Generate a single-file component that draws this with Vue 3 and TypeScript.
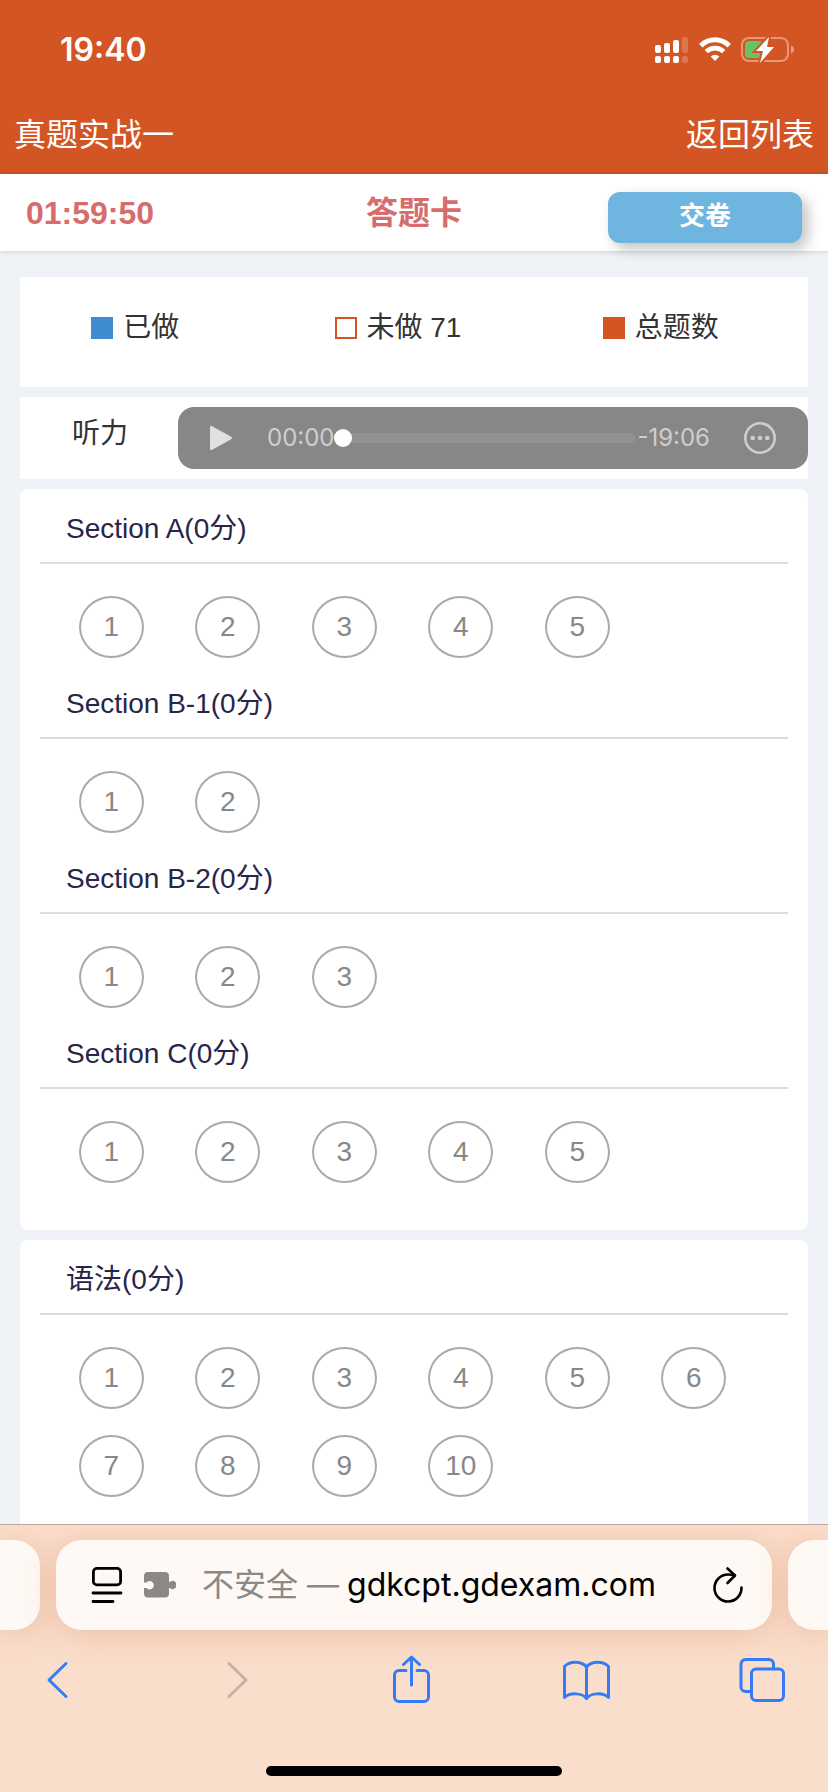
<script setup lang="ts">
import { ref } from 'vue'

interface Section {
  title: string
  count: number
}

const cards: Section[][] = [
  [
    { title: 'Section A(0分)', count: 5 },
    { title: 'Section B-1(0分)', count: 2 },
    { title: 'Section B-2(0分)', count: 3 },
    { title: 'Section C(0分)', count: 5 },
  ],
  [{ title: '语法(0分)', count: 10 }],
]

const legend = [
  { kind: 'done', label: '已做' },
  { kind: 'todo', label: '未做 71' },
  { kind: 'total', label: '总题数' },
]

const position = ref(0)
</script>

<template>
  <div class="screen">
    <header class="top">
      <div class="status">
        <span class="clock">19:40</span>
        <div class="status-icons">
          <svg width="34" height="26" viewBox="0 0 34 26" fill="#fff" aria-hidden="true">
            <rect x="0" y="8" width="6" height="8" rx="2" />
            <rect x="9" y="6" width="6" height="10" rx="2" />
            <rect x="18" y="3" width="6" height="13" rx="2" />
            <rect x="27" y="0" width="6" height="16" rx="2" opacity=".2" />
            <rect x="0" y="19" width="6" height="7" rx="2" />
            <rect x="9" y="19" width="6" height="7" rx="2" />
            <rect x="18" y="19" width="6" height="7" rx="2" />
            <rect x="27" y="19" width="6" height="7" rx="2" opacity=".2" />
          </svg>
          <svg width="32" height="26" viewBox="0 0 32 26" fill="none" aria-hidden="true">
            <path d="M1.800 8.700a20.200 20.200 0 0 1 28.400 0" stroke="#fff" stroke-width="5" />
            <path d="M7.300 14.600a12.400 12.400 0 0 1 17.400 0" stroke="#fff" stroke-width="4.800" />
            <path d="M11.700 19.400a6.200 6.200 0 0 1 8.600 0L16 24z" fill="#fff" />
          </svg>
          <svg width="54" height="28" viewBox="0 0 54 28" fill="none" aria-hidden="true">
            <rect x="1" y="2" width="46" height="23" rx="7" stroke="#fff" stroke-opacity=".4" stroke-width="2" />
            <path d="M50 9.500c4 1.500 4 6.500 0 8z" fill="#fff" opacity=".45" />
            <rect x="4" y="5" width="18" height="17" rx="4" fill="#65c466" />
            <path d="M28 1 15 15h7l-3 12L33 11h-7z" fill="#fff" stroke="#d35523" stroke-width="4" />
            <path d="M28 1 15 15h7l-3 12L33 11h-7z" fill="#fff" />
          </svg>
        </div>
      </div>
      <nav class="nav">
        <h1 class="nav-title">真题实战一</h1>
        <a class="nav-link" href="#list">返回列表</a>
      </nav>
    </header>

    <div class="timer-bar">
      <time class="timer">01:59:50</time>
      <h2 class="bar-title">答题卡</h2>
      <button class="submit" type="button">交卷</button>
    </div>

    <main class="content">
      <ul class="legend">
        <li v-for="item in legend" :key="item.kind" class="legend-item">
          <span class="swatch" :class="item.kind"></span>
          <span>{{ item.label }}</span>
        </li>
      </ul>

      <section class="listening">
        <label class="listening-label" for="seek">听力</label>
        <div class="player">
          <button class="player-btn play" type="button" aria-label="播放">
            <svg width="24" height="26" viewBox="0 0 24 26" aria-hidden="true">
              <path d="M1 2.500c0-1.400 1-2 2.200-1.300l19 10.500c1 .6 1 2 0 2.600l-19 10.500C2 25.500 1 24.900 1 23.500z" fill="#e0e0e0" />
            </svg>
          </button>
          <span class="time">00:00</span>
          <input id="seek" v-model.number="position" class="seek" type="range" min="0" max="1146" />
          <span class="time">-19:06</span>
          <button class="player-btn more" type="button" aria-label="更多">
            <svg width="32" height="32" viewBox="0 0 32 32" aria-hidden="true">
              <circle cx="16" cy="16" r="14.700" fill="none" stroke="#cecece" stroke-width="2.600" />
              <circle cx="8.700" cy="16" r="2.300" fill="#cecece" />
              <circle cx="16" cy="16" r="2.300" fill="#cecece" />
              <circle cx="23.300" cy="16" r="2.300" fill="#cecece" />
            </svg>
          </button>
        </div>
      </section>

      <div v-for="(card, index) in cards" :key="index" class="card">
        <section v-for="section in card" :key="section.title">
          <h3 class="section-title">{{ section.title }}</h3>
          <ol class="questions">
            <li v-for="n in section.count" :key="n">
              <button class="question" type="button">{{ n }}</button>
            </li>
          </ol>
        </section>
      </div>
    </main>

    <footer class="browser">
      <div class="tabs">
        <div class="pill prev"></div>
        <div class="pill address">
          <button class="icon-btn" type="button" aria-label="阅读模式">
            <svg width="32" height="38" viewBox="0 0 32 38" fill="none" stroke="#000" stroke-width="2.800" stroke-linecap="round" aria-hidden="true">
              <rect x="2.400" y="2.400" width="27.200" height="16.500" rx="3.500" />
              <path d="M2 27h28M2 35.500h20" />
            </svg>
          </button>
          <svg class="puzzle" width="32" height="28" viewBox="0 0 32 28" fill="#8b8888" aria-hidden="true">
            <path d="M4 1h17a4 4 0 0 1 4 4v6h1a4 4 0 1 1 0 6h-1v5.500a4 4 0 0 1-4 4H4a4 4 0 0 1-4-4V17h2.500a4.200 4.200 0 1 0 0-5.500H0V5a4 4 0 0 1 4-4z" />
          </svg>
          <button class="url" type="button">
            <span class="insecure">不安全 —</span>
            <span>gdkcpt.gdexam.com</span>
          </button>
          <button class="icon-btn" type="button" aria-label="刷新">
            <svg width="32" height="38" viewBox="0 0 32 38" fill="none" stroke="#000" stroke-width="2.600" stroke-linecap="round" stroke-linejoin="round" aria-hidden="true">
              <path d="M29.500 21.500A13.500 13.500 0 1 1 16 8.500q3.500 0 6.500 1" />
              <path d="M15.500 2.500l7.500 7-7.500 7.500" />
            </svg>
          </button>
        </div>
        <div class="pill next"></div>
      </div>
      <nav class="toolbar">
        <button class="tool" type="button" aria-label="后退">
          <svg viewBox="0 0 60 60"><path d="M39 13.500 22 30l17 16.500" /></svg>
        </button>
        <button class="tool" type="button" aria-label="前进" disabled>
          <svg viewBox="0 0 60 60"><path d="M26 13.500 43 30 26 46.500" /></svg>
        </button>
        <button class="tool" type="button" aria-label="共享">
          <svg viewBox="0 0 60 60">
            <path d="M26 20.500h-7a4.500 4.500 0 0 0-4.500 4.500v22a4.500 4.500 0 0 0 4.500 4.500h25a4.500 4.500 0 0 0 4.500-4.500V25a4.500 4.500 0 0 0-4.500-4.500h-7" />
            <path d="M31.500 35V7.500M23.500 14.500l8-7.500 8 7.500" />
          </svg>
        </button>
        <button class="tool" type="button" aria-label="书签">
          <svg viewBox="0 0 60 60">
            <path d="M30.500 17C26 11.200 14 10.500 8.500 16.500v31C14 42.500 26 42.500 30.500 48.500 35 42.500 47 42.500 52.500 47.500v-31C47 10.500 35 11.200 30.500 17zM30.500 17v31" />
          </svg>
        </button>
        <button class="tool" type="button" aria-label="标签页">
          <svg viewBox="0 0 60 60">
            <path d="M18 41.500h-4.500A4.500 4.500 0 0 1 9 37V14a4.500 4.500 0 0 1 4.500-4.500H37a4.500 4.500 0 0 1 4.500 4.500v4" />
            <rect x="19.500" y="19" width="32" height="31.500" rx="4.500" />
          </svg>
        </button>
      </nav>
      <div class="home-indicator"></div>
    </footer>
  </div>
</template>

<style>
body {
  margin: 0;
}
</style>

<style scoped>
.screen {
  display: flex;
  flex-direction: column;
  height: 100vh;
  overflow: hidden;
  background: #eff2f7;
  color: #333;
  font-family: "Liberation Sans", "Noto Sans CJK SC", sans-serif;
  font-size: 28px;
  line-height: 40px;
}

h1,
h2,
h3,
ul,
ol {
  margin: 0;
  padding: 0;
  font-size: inherit;
  font-weight: 400;
  list-style: none;
}

button {
  margin: 0;
  padding: 0;
  border: 0;
  background: none;
  color: inherit;
  font: inherit;
}

svg {
  display: block;
}

.top {
  flex: none;
  background: #d35523;
  color: #fff;
}

.status {
  display: flex;
  align-items: center;
  justify-content: space-between;
  height: 100px;
  padding: 0 33px 0 60px;
}

.clock {
  font-family: Inter, sans-serif;
  font-size: 32px;
  font-weight: 600;
}

.status-icons {
  display: flex;
  align-items: center;
  gap: 10px;
}

.nav {
  display: flex;
  align-items: center;
  justify-content: space-between;
  box-sizing: border-box;
  height: 74px;
  padding: 0 14px 4px;
}

.nav-title,
.nav-link {
  color: #fff;
  font-size: 32px;
  text-decoration: none;
}

.timer-bar {
  position: relative;
  z-index: 1;
  display: grid;
  grid-template-columns: 1fr auto 1fr;
  align-items: center;
  flex: none;
  height: 77px;
  padding: 0 26px;
  background: #fff;
  box-shadow: 0 0 6px rgba(0, 0, 0, 0.16);
  color: #d76c6c;
}

.timer,
.bar-title {
  font-size: 32px;
  font-weight: 700;
}

.submit {
  justify-self: end;
  width: 194px;
  height: 51px;
  margin-top: 10px;
  padding-bottom: 4px;
  border-radius: 12px;
  background: #6eb5df;
  box-shadow: 6px 6px 14px rgba(0, 0, 0, 0.24);
  color: #fff;
  font-size: 26px;
  font-weight: 700;
}

.content {
  display: flex;
  flex: 1;
  flex-direction: column;
  gap: 10px;
  min-height: 0;
  padding: 26px 20px 0;
  overflow: hidden;
}

.legend {
  display: grid;
  flex: none;
  grid-template-columns: repeat(3, 1fr);
  height: 110px;
  background: #fff;
}

.legend-item {
  display: flex;
  align-items: center;
  justify-content: center;
  gap: 10px;
  height: 102px;
  padding-right: 32px;
}

.swatch {
  box-sizing: border-box;
  width: 22px;
  height: 22px;
}

.swatch.done {
  background: #3f8ccf;
}

.swatch.todo {
  border: 2px solid #d35523;
}

.swatch.total {
  background: #d35523;
}

.listening {
  display: flex;
  flex: none;
  align-items: center;
  height: 82px;
  background: #fff;
}

.listening-label {
  width: 106px;
  padding: 0 0 8px 52px;
}

.player {
  display: flex;
  flex: 1;
  align-items: center;
  height: 62px;
  border-radius: 16px;
  background: #878787;
  color: #cecece;
}

.player-btn {
  flex: none;
}

.play {
  margin: 0 34px 0 31px;
}

.more {
  margin: 0 32px 0 34px;
}

.time {
  font-family: Inter, sans-serif;
  font-size: 24px;
}

.seek {
  flex: 1;
  min-width: 0;
  height: 18px;
  margin: 0 2px 0 0;
  appearance: none;
  background: none;
}

.seek::-webkit-slider-runnable-track {
  height: 10px;
  border-radius: 5px;
  background: #929292;
}

.seek::-webkit-slider-thumb {
  width: 18px;
  height: 18px;
  margin-top: -4px;
  appearance: none;
  border-radius: 50%;
  background: #fff;
}

.card {
  flex: none;
  padding: 0 20px 41px;
  border-radius: 8px;
  background: #fff;
}

.section-title {
  height: 73px;
  padding-left: 26px;
  border-bottom: 2px solid #ddd;
  color: #282548;
  line-height: 80px;
}

.questions {
  display: grid;
  grid-template-columns: repeat(6, 1fr);
  justify-items: center;
  row-gap: 26px;
  padding: 32px 36px 6px 13px;
}

.question {
  display: block;
  width: 65px;
  height: 62px;
  border: 2px solid #aaa;
  border-radius: 50%;
  color: #888;
}

.browser {
  position: relative;
  flex: none;
  overflow: hidden;
  border-top: 1px solid #bda79c;
  background: #f9decb;
}

.tabs {
  display: grid;
  grid-template-columns: 40px 1fr 40px;
  gap: 16px;
  padding-top: 15px;
}

.pill {
  height: 90px;
  border-radius: 26px;
  background: #fef9f5;
  box-shadow: 0 4px 32px rgba(214, 112, 72, 0.28);
}

.prev {
  border-radius: 0 26px 26px 0;
}

.next {
  border-radius: 26px 0 0 26px;
}

.address {
  display: flex;
  align-items: center;
  padding: 0 28px 0 35px;
}

.icon-btn {
  flex: none;
}

.puzzle {
  flex: none;
  margin-left: 21px;
}

.url {
  flex: 1;
  padding-left: 26px;
  color: #000;
  font-family: Inter, "Noto Sans CJK SC", sans-serif;
  font-size: 32px;
  text-align: left;
  white-space: nowrap;
}

.insecure {
  margin-right: 8px;
  color: #8b8888;
}

.toolbar {
  display: flex;
  justify-content: space-between;
  padding: 20px 36px 0 27px;
}

.tool {
  width: 60px;
  height: 60px;
  color: #357af6;
}

.tool:disabled {
  color: #c6b1a4;
}

.tool svg {
  fill: none;
  stroke: currentColor;
  stroke-width: 3;
  stroke-linecap: round;
  stroke-linejoin: round;
}

.home-indicator {
  width: 296px;
  height: 10px;
  margin: 56px auto 16px;
  border-radius: 5px;
  background: #000;
}
</style>
